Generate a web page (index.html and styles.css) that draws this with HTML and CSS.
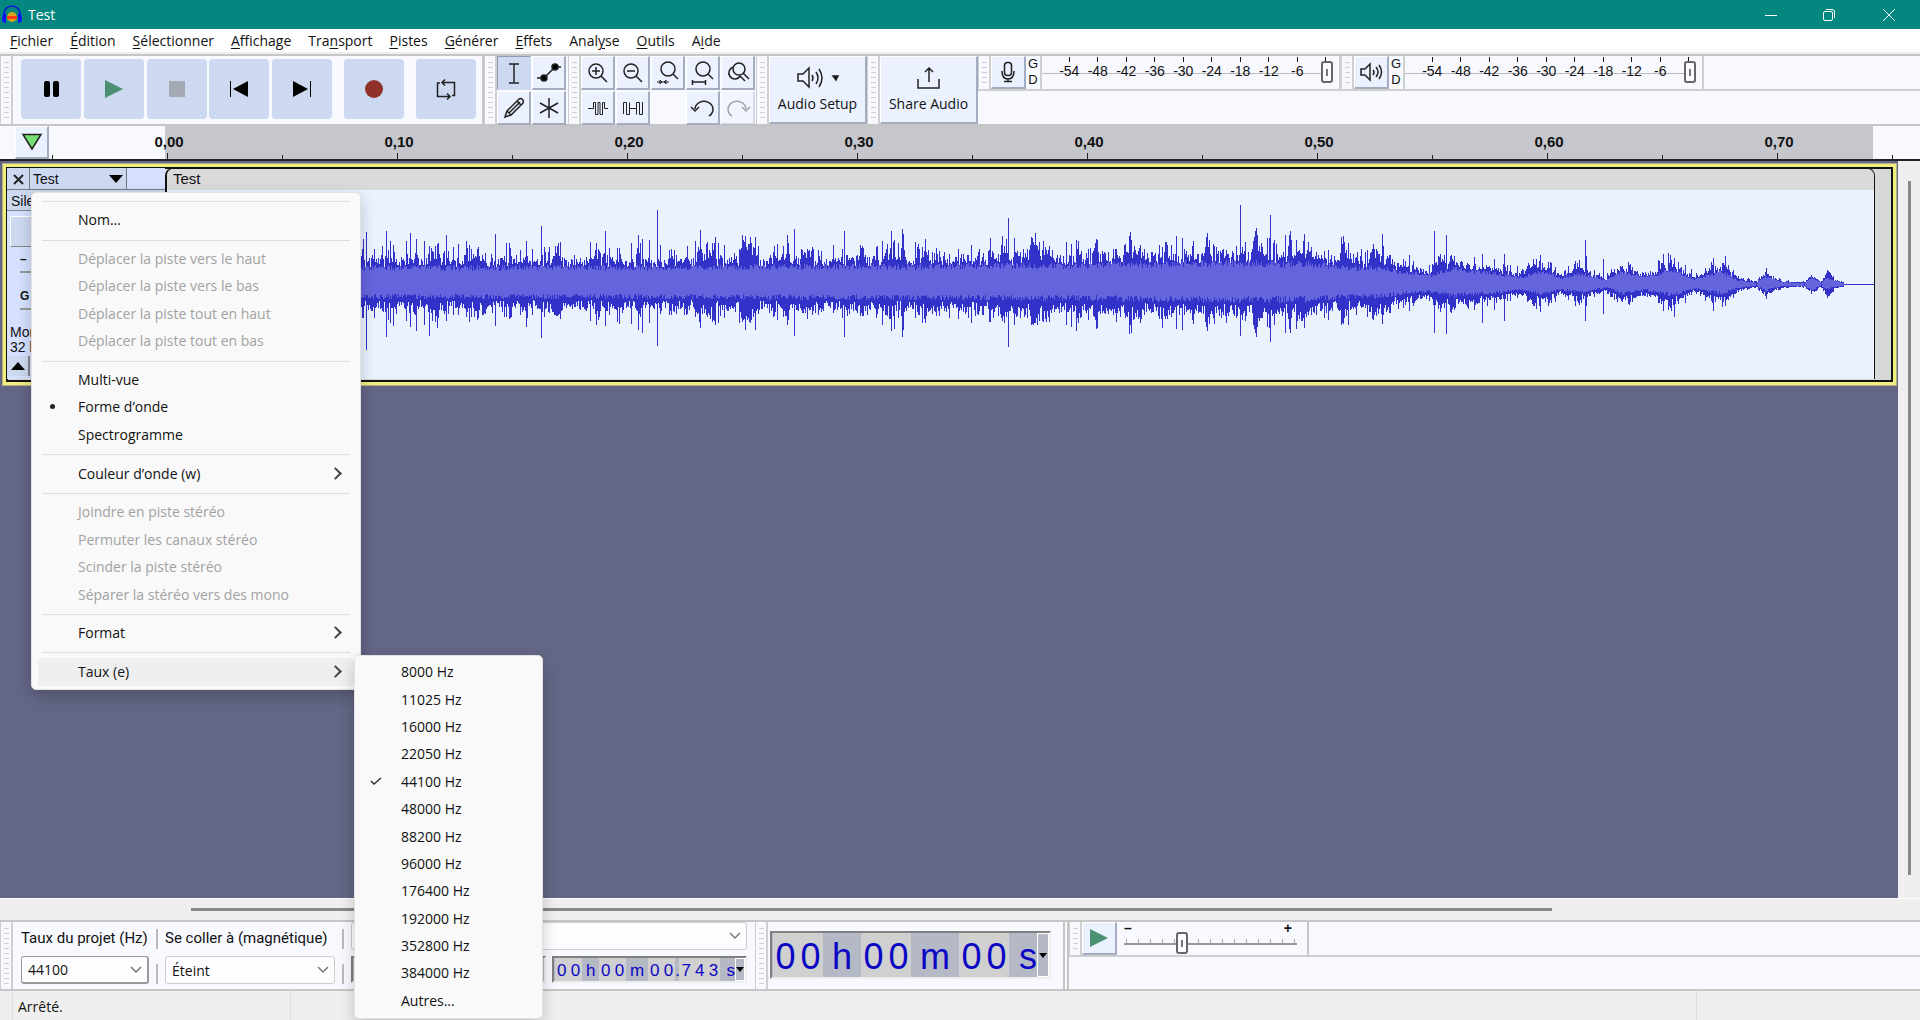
FILE: index.html
```html
<!DOCTYPE html>
<html lang="fr">
<head>
  <meta charset="UTF-8" />
  <meta name="viewport" content="width=device-width, initial-scale=1.0"/>
  <title>Test</title>
  <link rel="stylesheet" href="styles.css">
</head>
<body>

  <!-- TITLE BAR -->
  <header class="titlebar">
    <svg class="logo" width="20" height="20" viewBox="0 0 20 20">
      <circle cx="10" cy="12" r="5" fill="#d9a520"/>
      <path d="M5 11h10v3H5z" fill="#ff3a12"/>
      <path d="M2 12V9a8 8 0 0 1 16 0v3" fill="none" stroke="#0a14d8" stroke-width="1.500"/>
      <path d="M0 14q0-6 4-5v9q-4 0-4-4zM20 14q0-6-4-5v9q4 0 4-4z" fill="#0a14f0"/>
    </svg>
    <span class="title">Test</span>
    <div class="window-buttons">
      <button aria-label="Réduire"><svg width="14" height="14"><path d="M1 7.500h12"/></svg></button>
      <button aria-label="Restaurer"><svg width="14" height="14"><rect x="1.500" y="3.500" width="9" height="9" rx="1.500"/><path d="M4 1.500h6q2.500 0 2.500 2.500v6"/></svg></button>
      <button aria-label="Fermer"><svg width="14" height="14"><path d="M1 1l12 12M13 1L1 13"/></svg></button>
    </div>
  </header>

  <!-- MENU BAR -->
  <nav class="menubar">
    <a href="#"><u>F</u>ichier</a>
    <a href="#"><u>É</u>dition</a>
    <a href="#"><u>S</u>électionner</a>
    <a href="#"><u>A</u>ffichage</a>
    <a href="#">Tra<u>n</u>sport</a>
    <a href="#"><u>P</u>istes</a>
    <a href="#"><u>G</u>énérer</a>
    <a href="#"><u>E</u>ffets</a>
    <a href="#">Anal<u>y</u>se</a>
    <a href="#"><u>O</u>utils</a>
    <a href="#">A<u>i</u>de</a>
  </nav>

  <!-- TOOLBARS -->
  <section class="dock">
    <div class="grip"></div>
    <div class="transport">
      <div class="transport-main">
        <button aria-label="Pause"><svg width="20" height="20"><rect x="3" y="2" width="6" height="16" rx="2"/><rect x="12" y="2" width="6" height="16" rx="2"/></svg></button>
        <button aria-label="Lecture"><svg width="20" height="20"><path d="M1 1l18 9-18 9z" fill="#4b9070"/></svg></button>
        <button aria-label="Arrêt"><svg width="20" height="20"><rect x="2" y="2" width="16" height="16" fill="#a5a9b3"/></svg></button>
        <button aria-label="Début"><svg width="20" height="20"><path d="M1 2h1v16H1zM19 2v16L4 10z"/></svg></button>
        <button aria-label="Fin"><svg width="20" height="20"><path d="M18 2h1v16h-1zM1 2v16l15-8z"/></svg></button>
      </div>
      <button aria-label="Enregistrer"><svg width="20" height="20"><circle cx="10" cy="10" r="9" fill="#91322a"/></svg></button>
      <button aria-label="Boucle"><svg class="line" width="20" height="20"><path d="M4 4H1.500v13.500H14M11 14.500l3 3-3 3M16 16.500h2.500V3.500H6M9 .5l-3 3 3 3"/></svg></button>
    </div>
    <div class="grip"></div>
    <div class="tool-grid tools">
      <button class="on" aria-label="Sélection"><svg class="line" width="24" height="24"><path d="M7 3h10M7 22h10M12 3v19"/></svg></button>
      <button aria-label="Niveau"><svg class="line" width="24" height="24"><path d="M0 17h7L18 6h6"/><circle cx="7" cy="17" r="3" fill="#000"/><circle cx="18" cy="6" r="3" fill="#000"/></svg></button>
      <button aria-label="Dessin"><svg class="line" width="24" height="24"><path d="M3 21l2-6L17 3q2-1 3.500.500T21 7L9 19zM15 5l4 4M5 15l4 4M7 17L18 6"/></svg></button>
      <button aria-label="Multi-outil"><svg class="line" width="24" height="24"><path d="M12 2v20M3 7l18 10M21 7L3 17"/></svg></button>
    </div>
    <div class="grip"></div>
    <div class="tool-grid edit">
      <button aria-label="Zoom avant"><svg class="line" width="24" height="24"><circle cx="10" cy="10" r="7"/><path d="M15 15l6 6M6 10h8M10 6v8"/></svg></button>
      <button aria-label="Zoom arrière"><svg class="line" width="24" height="24"><circle cx="10" cy="10" r="7"/><path d="M15 15l6 6M6 10h8"/></svg></button>
      <button aria-label="Zoom sélection"><svg class="line" width="24" height="24"><circle cx="12" cy="8" r="7"/><path d="M17 13l5 5"/><path class="thin" d="M1 21h12M4 19v4l2-2zM10 19v4l-2-2z"/></svg></button>
      <button aria-label="Zoom projet"><svg class="line" width="24" height="24"><circle cx="12" cy="8" r="7"/><path d="M17 13l5 5M1.500 19v5M14.500 19v5M2 21h12"/></svg></button>
      <button aria-label="Bascule zoom"><svg class="line" width="24" height="24"><circle cx="13" cy="8" r="6"/><path d="M17 12l6 6M8 6a6 6 0 1 0 6 9M14 15l5 5"/></svg></button>
      <button aria-label="Rogner"><svg class="line" width="24" height="24"><path class="thin" d="M2 12.500h5.500V6.500h2v12h2.500v-12h2v12h2.500v-12h2v6H22"/></svg></button>
      <button aria-label="Silence"><svg class="line" width="24" height="24"><path class="thin" d="M2.500 18V6.500h3v12h3V6.500M8.500 12.500h7M15.500 18.500v-12h3v12h3V6"/></svg></button>
      <span></span>
      <button aria-label="Annuler"><svg class="line" width="24" height="24"><path d="M4 13a9 8 0 1 1 14 7M0 11l4 4 4-4"/></svg></button>
      <button aria-label="Rétablir" disabled><svg class="line" width="24" height="24"><path d="M20 13a9 8 0 1 0-14 7M24 11l-4 4-4-4"/></svg></button>
    </div>
    <div class="grip"></div>
    <button class="big-button">
      <svg class="line" width="44" height="24"><path d="M2 8h5l6-6v19l-6-6H2zM16 9q2 3 0 6M20 6q4 6 0 12M23 3q6 9 0 18"/><path d="M37 10h5l-2 4z" fill="#000"/></svg>
      Audio Setup
    </button>
    <div class="grip"></div>
    <button class="big-button">
      <svg class="line" width="24" height="24"><path d="M1 13v9h21v-9M12 16V2M8 6l4-4 4 4"/></svg>
      Share Audio
    </button>
    <div class="dock-rest">
      <div class="meter-row">
        <div class="grip"></div>
        <button class="tool" aria-label="Niveau d'enregistrement"><svg class="line" width="24" height="24"><rect x="8.500" y="2.500" width="7" height="13" rx="3"/><path d="M6 11q0 8 6 8t6-8M12 19v2M8 21.500h8"/></svg></button>
        <div class="channels"><span>G</span><span>D</span></div>
        <div class="meter">
          <ol><li>-54</li><li>-48</li><li>-42</li><li>-36</li><li>-30</li><li>-24</li><li>-18</li><li>-12</li><li>-6</li><li>0</li></ol>
          <input type="range" min="0" max="100" value="100" aria-label="Volume d'enregistrement">
        </div>
        <div class="grip"></div>
        <button class="tool" aria-label="Niveau de lecture"><svg class="line" width="24" height="24"><path d="M2 9h4l5-5v16l-5-5H2zM14 10q2 2 0 5M17 7q4 5 0 10M20 5q5 7 0 14"/></svg></button>
        <div class="channels"><span>G</span><span>D</span></div>
        <div class="meter">
          <ol><li>-54</li><li>-48</li><li>-42</li><li>-36</li><li>-30</li><li>-24</li><li>-18</li><li>-12</li><li>-6</li><li>0</li></ol>
          <input type="range" min="0" max="100" value="100" aria-label="Volume de lecture">
        </div>
      </div>
    </div>
  </section>

  <!-- TIMELINE -->
  <section class="timeline">
    <button class="pin" aria-label="Tête de lecture"><svg width="22" height="18"><path d="M2 1.500h18L11 16z" fill="#7ade76" stroke="#222" stroke-width="1.500"/></svg></button>
    <ol class="ruler">
      <li>0,00</li><li>0,10</li><li>0,20</li><li>0,30</li><li>0,40</li><li>0,50</li><li>0,60</li><li>0,70</li><li class="end"></li>
    </ol>
  </section>

  <!-- TRACKS -->
  <main class="workspace">
    <div class="tracks">
      <article class="track">
        <div class="track-panel">
          <div class="track-head">
            <button class="close" aria-label="Fermer la piste"><svg class="line" width="12" height="12"><path d="M2 2l9 9M11 2l-9 9" stroke-width="2"/></svg></button>
            <button class="name">Test <svg width="14" height="8"><path d="M0 0h14L7 8z"/></svg></button>
          </div>
          <div class="mute">Silence</div>
          <div class="fx"></div>
          <div class="gain">–</div>
          <div class="gain">G</div>
          <p>Mono<br>32 bits</p>
          <button class="collapse" aria-label="Réduire la piste"><svg width="14" height="8"><path d="M0 8h14L7 0z"/></svg></button>
        </div>
        <div class="clip">
          <div class="clip-title">Test</div>
          <svg class="wave" viewBox="0 0 1708 189" preserveAspectRatio="none">
            <path id="peaks"/>
            <path id="rms"/>
          </svg>
        </div>
      </article>
    </div>
    <div class="scroll-y"><div></div></div>
  </main>
  <div class="scroll-x"><div></div></div>

  <!-- BOTTOM TOOLBARS -->
  <section class="dock bottom">
    <div class="grip"></div>
    <div class="selection">
      <div class="field project-rate">
        <label for="rate">Taux du projet (Hz)</label>
        <select id="rate"><option>44100</option></select>
      </div>
      <div class="rules"></div>
      <div class="field snap">
        <label for="snap">Se coller à (magnétique)</label>
        <select id="snap"><option>Éteint</option></select>
      </div>
      <div class="rules"></div>
      <div class="range">
        <select aria-label="Sélection"><option></option></select>
        <div class="times">
          <div class="time"></div>
          <div class="time"><b>0</b><b>0</b><i>h</i><b>0</b><b>0</b><i class="m">m</i><b>0</b><b>0</b><i class="dot">.</i><b>7</b><b>4</b><b>3</b><i class="s">s</i><button aria-label="Format"><svg width="8" height="5"><path d="M0 0h8L4 5z"/></svg></button></div>
        </div>
      </div>
    </div>
    <div class="grip"></div>
    <div class="clock">
      <div class="time large"><b>0</b><b>0</b><i>h</i><b>0</b><b>0</b><i class="m">m</i><b>0</b><b>0</b><i class="s">s</i><button aria-label="Format"><svg width="8" height="5"><path d="M0 0h8L4 5z"/></svg></button></div>
    </div>
    <div class="dock-rest">
      <div class="meter-row">
        <div class="grip"></div>
        <button class="tool" aria-label="Lecture à vitesse"><svg width="20" height="20"><path d="M1 1l18 9-18 9z" fill="#4b9070"/></svg></button>
        <div class="speed">
          <div><span>–</span><span>+</span></div>
          <input type="range" min="0" max="100" value="32" aria-label="Vitesse de lecture">
        </div>
      </div>
    </div>
  </section>

  <footer class="statusbar"><span class="state">Arrêté.</span><span class="info"></span></footer>

  <!-- TRACK MENU -->
  <ul class="menu track-menu">
    <li class="sep"></li>
    <li><button>Nom...</button></li>
    <li class="sep"></li>
    <li><button disabled>Déplacer la piste vers le haut</button></li>
    <li><button disabled>Déplacer la piste vers le bas</button></li>
    <li><button disabled>Déplacer la piste tout en haut</button></li>
    <li><button disabled>Déplacer la piste tout en bas</button></li>
    <li class="sep"></li>
    <li><button>Multi-vue</button></li>
    <li><button class="dot">Forme d’onde</button></li>
    <li><button>Spectrogramme</button></li>
    <li class="sep"></li>
    <li><button class="more">Couleur d’onde (w)</button></li>
    <li class="sep"></li>
    <li><button disabled>Joindre en piste stéréo</button></li>
    <li><button disabled>Permuter les canaux stéréo</button></li>
    <li><button disabled>Scinder la piste stéréo</button></li>
    <li><button disabled>Séparer la stéréo vers des mono</button></li>
    <li class="sep"></li>
    <li><button class="more">Format</button></li>
    <li class="sep"></li>
    <li><button class="more open">Taux (e)</button></li>
  </ul>

  <ul class="menu rate-menu">
    <li><button>8000 Hz</button></li>
    <li><button>11025 Hz</button></li>
    <li><button>16000 Hz</button></li>
    <li><button>22050 Hz</button></li>
    <li><button><svg class="check" width="12" height="8"><path d="M1 4l3 3 7-6"/></svg>44100 Hz</button></li>
    <li><button>48000 Hz</button></li>
    <li><button>88200 Hz</button></li>
    <li><button>96000 Hz</button></li>
    <li><button>176400 Hz</button></li>
    <li><button>192000 Hz</button></li>
    <li><button>352800 Hz</button></li>
    <li><button>384000 Hz</button></li>
    <li><button>Autres...</button></li>
  </ul>

  <script src="wave.js"></script>
</body>
</html>
```

FILE: styles.css
```css
* { box-sizing: border-box; }
body { margin: 0; height: 100vh; position: relative; overflow: hidden; display: flex; flex-direction: column; font: 14px "Open Sans", "Noto Sans", sans-serif; color: #111; background: #efefef; }
button, select { font: inherit; color: inherit; border: none; background: none; padding: 0; margin: 0; }
ul, ol { list-style: none; margin: 0; padding: 0; }
svg { display: block; }
.line { fill: none; stroke: #222; stroke-width: 1.5; overflow: visible; }
.thin { stroke-width: 1; }

.titlebar { height: 29px; flex: none; display: flex; align-items: center; background: #04877f; color: #fff; }
.logo { margin-left: 2px; }
.title { margin-left: 6px; flex: 1; }
.window-buttons { display: flex; }
.window-buttons button { width: 58px; height: 28px; display: grid; place-items: center; }
.window-buttons button:last-child { width: 62px; }
.window-buttons svg { fill: none; stroke: #fff; }

.menubar { height: 25px; flex: none; display: flex; gap: 17px; padding: 0 10px; line-height: 23px; background: #fff; border-bottom: 2px solid #eee; }
.menubar a { color: #111; text-decoration: none; }
.menubar u { text-underline-offset: 2px; }

/* toolbars */
.dock { height: 72px; flex: none; display: flex; background: #f8f9ff; border-top: 2px solid #c6c6c6; border-bottom: 2px solid #c6c6c6; }
.grip { width: 13px; flex: none; border: 1px solid #cfcfcf; border-width: 0 2px 0 1px; background: repeating-linear-gradient(#ccd0d4 0 1px, transparent 1px 5px) center 6px / 5px calc(100% - 11px) no-repeat; }
.transport { display: flex; gap: 12px; align-items: flex-start; padding: 3px 6px 0 8px; border-right: 2px solid #c6c6c6; }
.transport-main { display: flex; justify-content: space-between; width: 311px; }
.transport button { width: 60px; height: 60px; border-radius: 4px; background: #cdd9f1; display: grid; place-items: center; }
.tool-grid { display: grid; grid-template-rows: repeat(2, 34px); gap: 1px; padding: 0 1px; flex: none; }
.tools { grid-template-columns: repeat(2, 34px); }
.edit { grid-template-columns: repeat(5, 34px); padding-right: 0; }
.tools, .edit { margin-left: -1px; }
.tools + .grip, .edit + .grip { margin-left: 1px; }
.tool-grid button, .tool, .big-button, .pin { background: #ebf1ff; border: 1px solid #fff; border-right: 2px solid #a4acbf; border-bottom: 2px solid #a4acbf; display: grid; place-items: center; }
.tool-grid .on { background: #cdd9f1; border-color: #8f99b3 #cdd9f1 #cdd9f1 #8f99b3; }
.tool-grid button:disabled { opacity: .4; }
.big-button { width: 98px; flex: none; align-content: center; gap: 4px; }
.dock-rest { flex: 1; }
.meter-row { height: 35px; display: flex; border-bottom: 2px solid #cfcfcf; }
.tool { width: 35px; flex: none; }
.channels { width: 14px; display: flex; flex-direction: column; align-items: center; font: 13px/16px "Liberation Sans", sans-serif; }
.meter { width: 301px; flex: none; position: relative; border-right: 2px solid #cfcfcf; border-left: 2px solid #cfcfcf; font: 14px/16px "Liberation Sans", sans-serif; background: linear-gradient(#bbb, #bbb) 0 17px / 288px 1px no-repeat; }
.meter ol { display: grid; grid-template-columns: repeat(10, 1fr); width: 285px; margin-left: 13px; text-align: center; }
.meter li::before { content: ""; display: block; width: 1px; height: 5px; margin: 1px auto; background: #111; }
.meter input { position: absolute; right: 6px; top: 4px; width: 285px; }

input[type=range] { appearance: none; margin: 0; height: 24px; background: none; }
input[type=range]::-webkit-slider-thumb { appearance: none; width: 12px; height: 22px; border: 2px solid #666; border-radius: 3px; background: linear-gradient(#777, #777) center / 2px 7px no-repeat #fafaff; }

/* timeline */
.timeline { height: 35px; flex: none; display: flex; background: #f8f9ff; border-bottom: 2px solid #222; }
.pin { width: 34px; margin-left: 15px; }
.ruler { flex: 1; display: flex; overflow: hidden; padding-left: 3px; background: linear-gradient(#c6c7cc, #c6c7cc) 116px 0 / calc(100% - 163px) 100% no-repeat; font: bold 15px/17px "Liberation Sans", sans-serif; }
.ruler li { width: 230px; flex: none; display: flex; flex-direction: column; justify-content: flex-end; align-items: center; padding-left: 4px; background: linear-gradient(#222, #222) 0 100% / 1px 4px no-repeat; }
.ruler li::after { content: ""; width: 1px; height: 6px; margin: 3px 4px 0 0; background: #222; }
.ruler .end::after { background: none; }

/* tracks */
.workspace { flex: 1; min-height: 0; display: flex; }
.tracks { flex: 1; padding: 2px 1px 0 2px; background: #636685; }
.track { height: 223px; display: flex; background: #d6d8d8; border: 1px solid #b3b183; outline: 3px solid #f1ee80; outline-offset: -4px; padding: 4px 21px 6px 4px; box-shadow: inset 0 0 0 5px #111; }
.track-panel { width: 158px; flex: none; background: #d5e1ff; font: 14px/16px "Liberation Sans", sans-serif; }
.track-head { height: 22px; display: flex; border-bottom: 1px solid #777; }
.close { width: 23px; display: grid; place-items: center; background: #cdd9f1; border-right: 1px solid #777; }
.name { width: 97px; display: flex; align-items: center; justify-content: space-between; padding: 0 3px; background: #cdd9f1; border-right: 1px solid #777; }
.mute { height: 21px; padding: 3px 4px; background: #cdd9f1; border-bottom: 1px solid #888; }
.fx { height: 31px; margin: 5px 3px 4px; background: #cdd9f1; border: 1px solid #fff; border-bottom-color: #888; }
.gain { height: 22px; margin: 0 13px 15px; border-bottom: 2px solid #999; font-weight: bold; font-size: 12px; }
.track-panel p { margin: 0 3px 1px; line-height: 15px; }
.collapse { width: 23px; height: 20px; display: grid; place-items: center; background: #cdd9f1; border-right: 2px solid #888; }
.clip { flex: 1; min-width: 0; display: flex; flex-direction: column; background: #eaf1ff; border: 1px solid #111; border-width: 1px 1px 0 2px; border-radius: 8px 8px 0 0; overflow: hidden; }
.clip-title { height: 21px; flex: none; padding-left: 6px; background: #dadada; font: 15px/20px "Liberation Sans", sans-serif; }
.wave { flex: 1; min-height: 0; width: 100%; shape-rendering: crispEdges; }
#peaks { fill: #3232c8; }
#rms { fill: #6464dc; }
.scroll-y { width: 22px; padding: 20px 0 23px 10px; display: flex; }
.scroll-y div { width: 3px; background: #888; }
.scroll-x { height: 22px; flex: none; padding: 9px 368px 0 191px; border-top: 1px solid #fff; }
.scroll-x div { height: 3px; background: #888; }

/* bottom */
.bottom { height: 71px; }
.selection { width: 742px; flex: none; display: flex; padding-left: 8px; }
.field { display: flex; flex-direction: column; justify-content: space-between; padding-bottom: 5px; }
.field label { font: 15px/33px Roboto, sans-serif; white-space: nowrap; }
.project-rate { width: 128px; }
.snap { width: 170px; }
select { appearance: none; border: 1px solid #ccc; border-radius: 3px; }
.selection select { height: 28px; padding: 0 6px; background: url("data:image/svg+xml,%3Csvg xmlns='http://www.w3.org/2000/svg' width='12' height='8'%3E%3Cpath d='M1 1l5 5 5-5' fill='none' stroke='%23777' stroke-width='1.5'/%3E%3C/svg%3E") right 5px center no-repeat #fdfdff; }
.project-rate select { border: 2px solid #999; border-width: 1px 2px 2px 1px; }
.rules { width: 16px; flex: none; background: linear-gradient(#bbb 0 20px, transparent 20px 35px, #bbb 35px) 7px 7px / 2px 55px no-repeat; }
.range { display: flex; flex-direction: column; justify-content: space-between; padding-bottom: 6px; }
.range select { width: 396px; }
.times { display: flex; justify-content: space-between; width: 396px; }
.time { width: 195px; height: 27px; display: flex; padding-left: 1px; background: #b4b9c5; border: 2px solid #eee; border-top-color: #808080; border-left-color: #808080; color: #0b06c4; font: 17px/25px "Liberation Sans", sans-serif; }
.time b, .time i { width: 14px; font-weight: normal; font-style: normal; text-align: center; }
.time b { background: #d0d0d0; }
.time i { width: 17px; }
.time .m { width: 22px; }
.time .dot { width: 4px; }
.time .s { width: 15px; text-align: right; }
.time button { flex: 1; border: 1px solid #fff; display: grid; place-items: center; }
.time svg { overflow: visible; }
.clock { width: 297px; flex: none; padding: 9px 0 0 2px; border-right: 2px solid #c6c6c6; }
.clock .large { width: 281px; height: 48px; font-size: 36px; line-height: 48px; }
.large b { width: 25px; }
.large i { width: 38px; }
.large .m { width: 48px; }
.large .s { width: 28px; }
.bottom .dock-rest { border-left: 2px solid #c6c6c6; margin-left: 2px; }
.speed { width: 192px; padding: 1px 11px 0 7px; border-right: 2px solid #c6c6c6; }
.speed div { display: flex; justify-content: space-between; padding-right: 4px; font: bold 14px/10px "Liberation Sans", sans-serif; }
.speed input { display: block; width: 173px; margin-top: -2px; background: repeating-linear-gradient(90deg, #aaa 0 1px, transparent 1px 12px) 2px 8px / 169px 4px no-repeat, linear-gradient(#999, #999) 0 12px / 100% 2px no-repeat; }
.statusbar { height: 29px; flex: none; display: flex; padding-left: 12px; line-height: 32px; }
.state { width: 279px; border: 1px solid #ddd; border-width: 0 1px; padding-left: 5px; }
.info { flex: 1; margin-right: 223px; border-right: 1px solid #ddd; }

/* popup menus */
.menu { position: absolute; display: flex; flex-direction: column; background: #f9f9f9; border: 1px solid #e2e2e2; border-radius: 5px; padding: 3px 6px; box-shadow: 0 6px 16px rgba(0, 0, 0, .2); }
.menu li { flex: 1; display: flex; }
.menu .sep { flex: 0 0 1px; margin: 5px 4px; background: #ddd; }
.menu button { flex: 1; display: flex; align-items: center; position: relative; padding: 0 0 2px 40px; border-radius: 4px; white-space: nowrap; }
.menu button:disabled { color: #a2a2a2; }
.track-menu { left: 31px; top: 192px; width: 330px; height: 498px; }
.rate-menu { left: 354px; top: 655px; bottom: 1px; width: 189px; }
.menu .open { background: #efefef; }
.menu .more::after { content: ""; position: absolute; right: 14px; width: 7px; height: 7px; border: solid #444; border-width: 2px 2px 0 0; transform: rotate(45deg); }
.menu .dot::before { content: ""; position: absolute; left: 12px; width: 5px; height: 5px; border-radius: 50%; background: #222; }
.check { position: absolute; left: 9px; fill: none; stroke: #333; stroke-width: 1.5; }
```

FILE: wave.js
```js
// Envelope points of the clip: [x, amplitude]
const envelope = [
  [0, 27], [500, 28], [700, 29], [900, 31], [1060, 35], [1140, 34], [1184, 27],
  [1210, 27], [1240, 19], [1265, 15], [1285, 25], [1325, 19], [1355, 11],
  [1375, 21], [1395, 10], [1415, 17], [1440, 6], [1455, 20], [1475, 12],
  [1490, 15], [1505, 24], [1528, 8], [1545, 16], [1556, 20], [1572, 6],
  [1590, 2], [1599, 13], [1615, 3], [1638, 2], [1645, 11], [1655, 2],
  [1660, 10], [1668, 5], [1678, 2]
];

// Loud transients: x -> [up, down]
const spikes = {
  199: [52, 65], 219: [53, 52], 257: [43, 40], 262: [38, 51], 270: [40, 43],
  328: [50, 41], 374: [58, 53], 475: [45, 48], 490: [74, 61], 588: [47, 45],
  627: [55, 51], 677: [53, 52], 724: [53, 46], 841: [66, 62], 900: [42, 40],
  965: [44, 48], 1010: [48, 44], 1074: [79, 51], 1104: [69, 57], 1124: [53, 48],
  1182: [41, 40], 1268: [53, 48], 1280: [49, 49], 1316: [30, 38], 1338: [30, 36],
  1419: [44, 36], 1437: [25, 29], 1502: [31, 25], 1508: [26, 32]
};

let seed = 7;
function random() {
  seed = (seed * 16807) % 2147483647;
  return seed / 2147483647;
}

function amplitude(x) {
  for (let i = 1; i < envelope.length; i++) {
    const [x0, a0] = envelope[i - 1];
    const [x1, a1] = envelope[i];
    if (x < x1) return a0 + (a1 - a0) * (x - x0) / (x1 - x0);
  }
  return 0;
}

function bar(x, up, down) {
  return `M${x} ${94 - Math.round(up)}h1V${95 + Math.round(down)}h-1z`;
}

let peaks = '';
let rms = '';
let drift = 0.5;
for (let x = 0; x < 1708; x++) {
  const size = amplitude(x);
  drift = drift * 0.7 + random() * 0.3;
  const swing = Math.max(0, (drift - 0.5) * 2.4);
  const burst = random() > 0.85 ? random() * 0.7 : 0;
  let up = size * (0.6 + swing + burst + random() * 0.35);
  let down = size * (0.55 + swing * 0.8 + burst * 0.8 + random() * 0.35);
  if (spikes[x]) [up, down] = spikes[x];
  peaks += bar(x, up, down);
  if (size > 2) rms += bar(x, Math.min(up, size * (0.48 + random() * 0.22)), Math.min(down, size * (0.32 + random() * 0.2)));
}
document.getElementById('peaks').setAttribute('d', peaks);
document.getElementById('rms').setAttribute('d', rms);
```
